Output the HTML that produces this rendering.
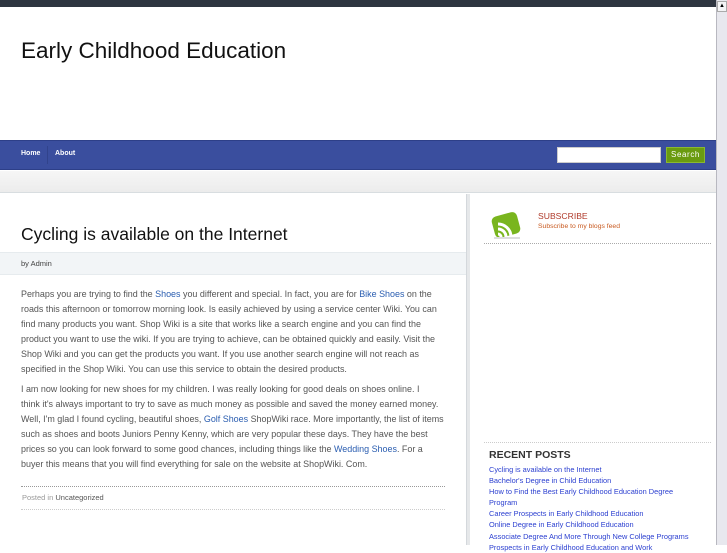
<!DOCTYPE html>
<html><head><style>
*{margin:0;padding:0;box-sizing:border-box}
body{width:727px;height:545px;overflow:hidden;background:#fff;font-family:"Liberation Sans",sans-serif;position:relative}
.a{position:absolute}
.p{font-size:8.95px;line-height:15px;color:#555;white-space:nowrap}
.p a,.rp a{color:#2a5db0;text-decoration:none}
.rp{font-size:7.4px;line-height:11.1px;color:#2b3fd0;white-space:nowrap}
</style></head><body>
<div class="a" style="left:0;top:0;width:716px;height:7px;background:#2e3540"></div>
<div class="a" style="left:716px;top:0;width:11px;height:545px;background:#e8e8ee;border-left:1px solid #b8b8c0"></div>
<div class="a" style="left:717px;top:1px;width:10px;height:11px;background:#f4f4f6;border:1px solid #aaa;font-size:6px;text-align:center;line-height:9px">▲</div>
<div class="a" style="left:21px;top:38px;font-size:22.5px;color:#111">Early Childhood Education</div>
<div class="a" style="left:0;top:140px;width:716px;height:30px;background:#3a4e9e;border-top:1px solid #2d3f88;border-bottom:1px solid #2d3f88"></div>
<div class="a" style="left:21px;top:150px;font-size:7px;color:#fff;font-weight:bold">Home</div>
<div class="a" style="left:47px;top:146px;width:1px;height:18px;background:#31438c"></div>
<div class="a" style="left:55px;top:150px;font-size:7px;color:#fff;font-weight:bold">About</div>
<div class="a" style="left:557px;top:147px;width:104px;height:16px;background:#fff;border:1px solid #ccc"></div>
<div class="a" style="left:666px;top:147px;width:39px;height:16px;background:#6a9b10;border:1px solid #8ab830;color:#fff;font-size:8px;line-height:14px;text-align:center;letter-spacing:0.6px">Search</div>
<div class="a" style="left:0;top:171px;width:716px;height:22px;background:linear-gradient(#f6f6f6,#ececec);border-bottom:1px solid #d8dde0"></div>
<div class="a" style="left:466px;top:194px;width:4px;height:351px;background:#e6e8ea;border-left:1px solid #d4d8dc"></div>
<div class="a" style="left:21px;top:224px;font-size:17.5px;color:#111">Cycling is available on the Internet</div>
<div class="a" style="left:0;top:252px;width:466px;height:23px;background:#f2f5f7;border-top:1px solid #e6ebee;border-bottom:1px solid #e6ebee"></div>
<div class="a" style="left:21px;top:259px;font-size:7.5px;color:#444">by Admin</div>
<div class="a p" style="left:21px;top:287px">Perhaps you are trying to find the <a>Shoes</a> you different and special. In fact, you are for <a>Bike Shoes</a> on the<br>roads this afternoon or tomorrow morning look. Is easily achieved by using a service center Wiki. You can<br>find many products you want. Shop Wiki is a site that works like a search engine and you can find the<br>product you want to use the wiki. If you are trying to achieve, can be obtained quickly and easily. Visit the<br>Shop Wiki and you can get the products you want. If you use another search engine will not reach as<br>specified in the Shop Wiki. You can use this service to obtain the desired products.</div>
<div class="a p" style="left:21px;top:382px">I am now looking for new shoes for my children. I was really looking for good deals on shoes online. I<br>think it's always important to try to save as much money as possible and saved the money earned money.<br>Well, I'm glad I found cycling, beautiful shoes, <a>Golf Shoes</a> ShopWiki race. More importantly, the list of items<br>such as shoes and boots Juniors Penny Kenny, which are very popular these days. They have the best<br>prices so you can look forward to some good chances, including things like the <a>Wedding Shoes</a>. For a<br>buyer this means that you will find everything for sale on the website at ShopWiki. Com.</div>
<div class="a" style="left:21px;top:486px;width:424px;border-top:1px dotted #999"></div>
<div class="a" style="left:22px;top:493px;font-size:7.5px;color:#999">Posted in <span style="color:#555">Uncategorized</span></div>
<div class="a" style="left:21px;top:509px;width:424px;border-top:1px dotted #ccc"></div>
<svg class="a" style="left:490px;top:210px" width="36" height="30" viewBox="0 0 36 30"><rect x="3" y="4" width="26" height="22" rx="5" fill="#79b51e" transform="rotate(-15 16 15)"/><g fill="none" stroke="#fff" stroke-width="3"><path d="M8 24a3 3 0 0 1 3 3"/><path d="M8 19a8 8 0 0 1 8 8"/><path d="M8 14a13 13 0 0 1 13 12"/></g><rect x="4" y="27" width="26" height="2" fill="#ddd"/></svg>
<div class="a" style="left:538px;top:211px;font-size:8.6px;color:#b03a2a">SUBSCRIBE</div>
<div class="a" style="left:538px;top:223px;font-size:6.8px;color:#c85a20">Subscribe to my blogs feed</div>
<div class="a" style="left:484px;top:243px;width:227px;border-top:1px dotted #aaa"></div>
<div class="a" style="left:484px;top:442px;width:227px;border-top:1px dotted #ccc"></div>
<div class="a" style="left:489px;top:449px;font-size:10.5px;font-weight:bold;color:#333">RECENT POSTS</div>
<div class="a rp" style="left:489px;top:464px">Cycling is available on the Internet<br>Bachelor's Degree in Child Education<br>How to Find the Best Early Childhood Education Degree<br>Program<br>Career Prospects in Early Childhood Education<br>Online Degree in Early Childhood Education<br>Associate Degree And More Through New College Programs<br>Prospects in Early Childhood Education and Work</div>
</body></html>
